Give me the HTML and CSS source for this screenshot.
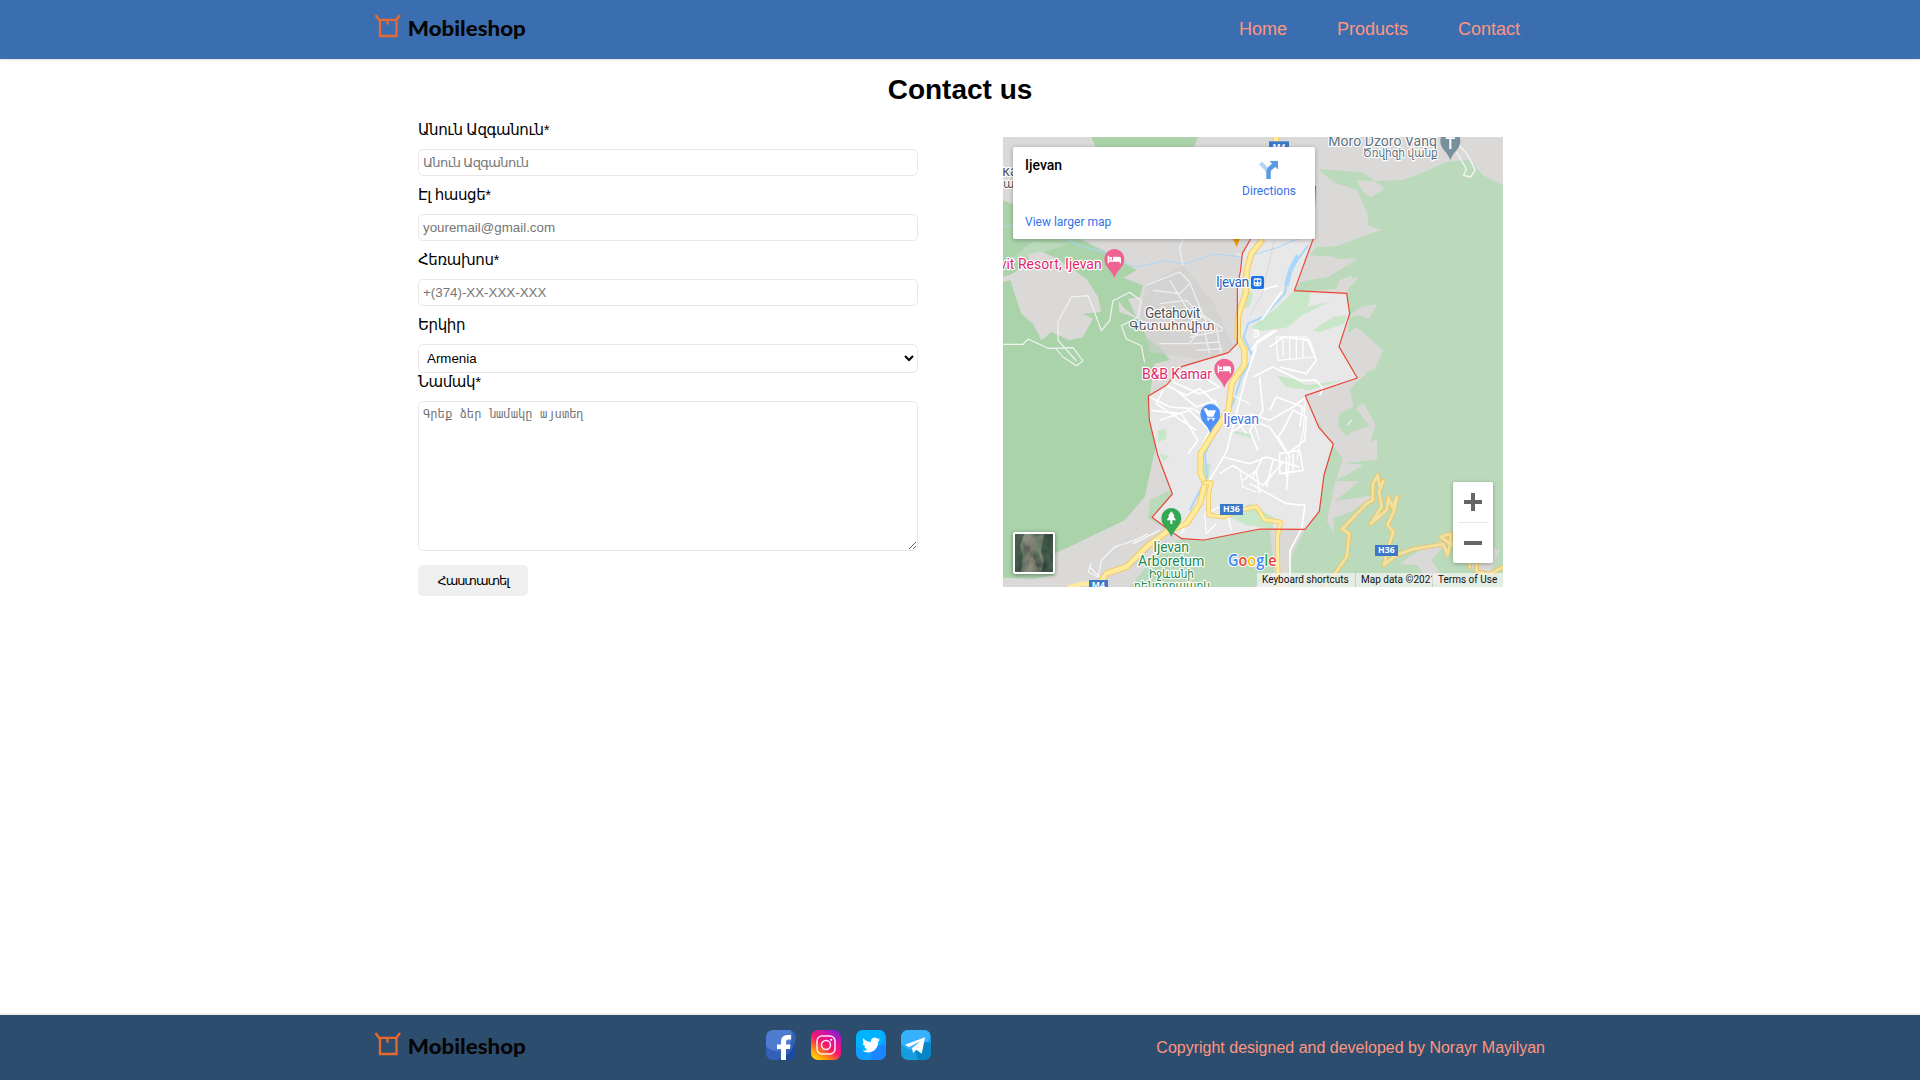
FILE: index.html
```html
<!DOCTYPE html>
<html lang="hy">
<head>
<meta charset="utf-8">
<title>Contact us</title>
<link rel="stylesheet" href="styles.css">
</head>
<body>
<svg class="defs" width="0" height="0" aria-hidden="true">
  <symbol id="logo" viewBox="0 0 160 30">
    <path d="M2 3l4.500 6M26.500 3l-4.500 6M6.500 7.800h16.500v16.200h-16.500zM14 8v4.500" transform="translate(-.5 -1)" fill="none" stroke="#e8692c" stroke-width="2.300"/>
    <text x="33.800" y="23" class="logo-text" textLength="118" lengthAdjust="spacingAndGlyphs">Mobileshop</text>
  </symbol>
</svg>

<header class="header">
  <div class="bar">
    <svg class="logo"><use href="#logo"/></svg>
    <nav class="nav"><a>Home</a><a>Products</a><a>Contact</a></nav>
  </div>
</header>

<main class="main">
  <h1 class="title">Contact us</h1>
  <div class="columns">
    <form class="form">
      <label class="label">Անուն Ազգանուն*</label>
      <input class="input input-name" placeholder="Անուն Ազգանուն">
      <label class="label">Էլ հասցե*</label>
      <input class="input" placeholder="youremail@gmail.com">
      <label class="label">Հեռախոս*</label>
      <input class="input" placeholder="+(374)-XX-XXX-XXX">
      <label class="label">Երկիր</label>
      <select class="select"><option>Armenia</option></select>
      <label class="label label-message">Նամակ*</label>
      <textarea class="textarea" placeholder="Գրեք ձեր նամակը այստեղ"></textarea>
      <button class="submit" type="button">Հաստատել</button>
    </form>

    <div class="map">
      <svg class="map-canvas" viewBox="0 0 1500 1350">
        <rect width="1500" height="1350" fill="#dbd9d7"/>
        <!-- woodland, west -->
        <path fill="#aad3aa" d="M0 190L60 215L220 300L320 350L400 400L330 440L300 410L250 425L170 370L110 340L60 330L80 370L30 410L0 420z"/>
        <path fill="#aad3aa" d="M0 435L22 430L55 530L90 560L115 610L145 585L200 610L240 600L270 545L240 530L295 525L285 480L240 410L300 405L330 410L420 445L410 480L375 485L400 540L365 515L345 490L350 525L405 545L430 600L480 640L500 669L455 680L441 770L441 860L458 930L425 1080L365 1150L155 1250L155 1315L90 1325L0 1322z"/>
        <path fill="#aad3aa" d="M265 0h320l-25 60H290z"/>
        <path fill="#bbdabb" d="M30 360l60-45 110 5-60 20-60 10-30 30z"/>
        <!-- woodland, east -->
        <path fill="#bbdabb" d="M946 96L1080 106L1115 132L1200 128L1250 110L1330 75L1400 68L1440 115L1500 145V1350H820L860 1250L890 1180H906L949 1123L963 1014L991 921L948 872L940 800L1035 760L1090 710L1100 660L1140 640L1060 570L1035 590L1040 529L1031 469L1050 415L1010 430L1000 455L930 462L874 461L900 420L1000 360L920 355L940 330L1000 328L1100 290L1135 280L1095 265L1095 235L1062 160L990 135z"/>
        <path fill="#dbd9d7" d="M1060 130L1115 132L1145 155L1105 180L1085 170zM1340 45l40 0 60 60 60 20V0h-130zM900 415l85-50 80 0-90 55-90 15zM1015 440l52-22-12 20-35 25zM1045 530l30-20 48-10-25 45-30-10-28 5zM1010 620l60-40 70 60-25 55-55 25z"/>
        <path fill="#dbd9d7" d="M907 776l50-15 85-3 10 60 30-20 35 65-15 55-30 5 50-15v60l-100 10 60 5-50 30-40 20 75 0-70 60 120-20-70 50-55 20 0 45-20-35 20-100 28-90-43-50z"/>
        <path fill="#bbdabb" d="M1010 830l45-22 45 60-50 15-20 15-25-30z"/>
        <path fill="#bbdabb" d="M440 1090l60-30 30 80-30 40-65-35zM540 1205l190-25 175-2-30 80-120 92H380l100-120z"/>
        <path fill="#dbd9d7" d="M1190 1280l90-60 55-10-50 60 40 60-50 15-30-60zM1400 1290l60-60 30 10-30 70zM800 1180h104l-44 90-10 80h-30z"/>
        <!-- village and town ground -->
        <path fill="#cfcfcf" opacity=".6" d="M430 445l110-60 90 110 70 150-120 20-140-20-30-120z"/>
        <path fill="#e8e8e8" d="M743 306L718 349L713 399L703 449V619L676 647L536 689L491 744L436 777L439 849L464 954L508 1071L447 1141L491 1174L536 1205L603 1209L771 1176L906 1177L949 1123L963 1014L991 921L948 872L907 776L1063 723L1008 629L1040 529L1031 469L874 461L931 304z"/>
        <path fill="#c8e6c8" d="M735 455l15 20-10 35-15 5zM874 461l50 0-10 50 70-20-90 45-40 35-80 10-30-10 80-60zM930 580l60-40 40-5-5 25-75 25zM820 715l50 10 40 20 110-15-100 30-70-10zM465 880l25-5v30l-25 10zM470 950l30 8-20 15zM690 880l60 15v8l-60-15zM741 1100l70 40 0 35-80-10-60-30zM603 980l20 0-8 50-12-20z"/>
        <!-- river -->
        <g fill="none" stroke="#a9d7fb" stroke-linejoin="round">
          <path stroke-width="6" d="M915 325L860 400L845 470L780 540L735 560L722 600L750 660L715 720L690 800L640 880L606 950L612 1020L560 1120"/>
          <path stroke-width="14" d="M885 355L862 400L850 445"/>
          <path stroke-width="3" d="M185 306l60 25 80 20 70 40 90-20 60 10 90-30 90 10 100-30 70-30M0 270l30-5M340 1300l60-20 60-70"/>
        </g>
        <!-- minor roads -->
        <g fill="none" stroke="#fff" stroke-width="5" stroke-linejoin="round">
          <path stroke-width="3.500" stroke="#f3f3f3" d="M0 622h60l15-16 60 28 75-2 30 40-20 14-40-26-20-24M220 672l-55-62 0-55 40-75 50-4 20 50 20 55 25-30 10-60 50-25 35 25-10 50-50 25 15 40 45 20 10 50"/>
          <path stroke-width="4" stroke="#eee" d="M430 445l100-40 30 30 40 100 60 40M450 460l80 10 30-30M470 500l80-10 60 60-50 70-90 0M540 385l-10-50 15-40M500 430l80 130M560 600l100-20M570 620l80-5M580 640l80-5M600 560l20 90M640 570l15 80M700 350l40 15"/>
          <path d="M760 635l-30 80-60 230-50 85-40 70-45 90M730 690l-40 40M815 495l20-30-60 85M775 460l50-15M745 640l20-30 50-30"/>
          <path d="M490 745l60 30 40-20 50 45 10 30 20 20M540 700l60 20 50 30-60 20-80-35M440 780l60 30 70 5 60 40M470 850l90-30 60 60-30 60M445 820l90 10 50 80-30 40M520 760l60 50 60-20M480 760l-20 40 120 80"/>
          <path d="M741 680l20-60 60-40M800 630l40-30 80 10 20 60-30 40-80-20M750 720l60-30 80 40 50 0 20 25-10 20M740 830l60 20 70-40 40-30M770 720l10 100-40 60 25 60M800 820l20-40 80 30-10 60M840 880l30-60 40 20-5 70-50 40-30-50zM680 890l60-40 60 20 60 90-10 100M660 960l80 20 50-20 100 30M650 1010l40-25 90 60 60-70M780 960l-30 60M810 970l-20 80M830 950l60-10 10 60-70 10zM850 960v60M870 950v50M741 1040l110 60 55 5-10 70-35 65v100M760 1000l10 70"/>
          <path stroke-width="3.500" d="M820 600h90l25 60-110 10zM840 600v60M860 595v70M880 595v70M900 600v65M720 860l30-10 20 60M700 850l30 40M650 1110l-45 20 5 60 30-30M645 1130l30 10 10 40M470 1180l-80 40M680 770l60 30M710 1000l10 50 40 15M720 1030l40-30M907 790l-6 90-20 90"/>
          <path stroke="#f4f4f4" stroke-width="4" d="M265 1280l-10 25 30 15 10-50 40-40 60-20 40-20M260 1290l30 30M1360 45l30 50-8 20 20 5 15-20-25-50-25-25"/>
          <path stroke="#cfcfcf" stroke-width="2" d="M815 306l-40 170-35 60M310 1270l110-110"/>
          <path stroke-width="3" d="M1033 865l15-18"/>
        </g>
        <!-- main roads -->
        <g fill="none" stroke-linejoin="round" stroke-linecap="round">
          <path stroke="#f2ca62" stroke-width="19" d="M819 0V20M775 312L745 350L731 400L728 469L705 539L704 599L724 639L724 684L686 739L676 819L631 889L593 949L593 1009L606 1039L591 1099L551 1159L491 1184L431 1229L371 1289L311 1309L281 1350"/>
          <path stroke="#ffeb9e" stroke-width="13" d="M819 0V20M775 312L745 350L731 400L728 469L705 539L704 599L724 639L724 684L686 739L676 819L631 889L593 949L593 1009L606 1039L591 1099L551 1159L491 1184L431 1229L371 1289L311 1309L281 1350M200 1350l40-10 40 0"/>
          <path stroke="#f2ca62" stroke-width="14" d="M606 1037H624L617 1070V1134L660 1140L721 1117L760 1109L785 1148L833 1155L823 1200L826 1350"/>
          <path stroke="#ffeb9e" stroke-width="9" d="M606 1037H624L617 1070V1134L660 1140L721 1117L760 1109L785 1148L833 1155L823 1200L826 1350"/>
          <path stroke="#e5c265" stroke-width="14" d="M970 1345L1031 1260L1039 1190L1018 1176L1090 1100L1109 1090L1110 1040L1124 1015L1130 1050L1141 1032L1128 1065L1136 1109L1103 1161L1151 1119L1156 1082L1168 1110L1182 1080L1172 1125L1153 1164L1171 1184L1153 1240L1143 1284L1180 1254L1231 1236L1321 1221L1333 1254L1342 1220L1343 1190L1313 1200L1342 1220L1400 1240L1400 1290M1421 1280V1304L1460 1311L1500 1290"/>
          <path stroke="#f1e1a0" stroke-width="9" d="M970 1345L1031 1260L1039 1190L1018 1176L1090 1100L1109 1090L1110 1040L1124 1015L1130 1050L1141 1032L1128 1065L1136 1109L1103 1161L1151 1119L1156 1082L1168 1110L1182 1080L1172 1125L1153 1164L1171 1184L1153 1240L1143 1284L1180 1254L1231 1236L1321 1221L1333 1254L1342 1220L1343 1190L1313 1200L1342 1220L1400 1240L1400 1290M1421 1280V1304L1460 1311L1500 1290"/>
          <path stroke="#ea4335" stroke-width="3.500" d="M743 306L718 349L713 399L703 449V619L676 647L536 689L491 744L436 777L439 849L464 954L508 1071L447 1141L491 1174L536 1205L603 1209L771 1176L906 1177L949 1123L963 1014L991 921L948 872L907 776L1063 723L1008 629L1040 529L1031 469L874 461L931 304L937 147"/>
        </g>
        <!-- road shields -->
        <g class="shield">
          <rect x="798" y="13" width="60" height="33"/><text x="828" y="38">M4</text>
          <rect x="651" y="1101" width="69" height="33"/><text x="685" y="1126">H36</text>
          <rect x="1116" y="1224" width="69" height="33"/><text x="1150" y="1249">H36</text>
          <rect x="258" y="1329" width="57" height="33"/><text x="286" y="1353">M4</text>
        </g>
        <!-- pins -->
        <path fill="#f29900" d="M687 300h26l-12 30z"/>
        <g transform="translate(334 366)"><path fill="#f06292" d="M0 57C-8 32-30 25-30 0a30 30 0 0160 0C30 25 8 32 0 57z"/><path fill="#fff" d="M-20-10h4v14h12v-11h18q6 0 6 6v14h-4v-5h-32v5h-4zM-15-6h8v8h-8z"/></g>
        <g transform="translate(664 695)"><path fill="#f06292" d="M0 57C-8 32-30 25-30 0a30 30 0 0160 0C30 25 8 32 0 57z"/><path fill="#fff" d="M-20-10h4v14h12v-11h18q6 0 6 6v14h-4v-5h-32v5h-4zM-15-6h8v8h-8z"/></g>
        <g transform="translate(622 831)"><path fill="#4f92f7" d="M0 57C-8 32-30 25-30 0a30 30 0 0160 0C30 25 8 32 0 57z"/><path fill="#fff" d="M-19-17h8l4 6h24l-8 19h-17l-10-20h-1zM-10 11h24v3h-24z"/><circle cx="-6" cy="17" r="3" fill="#fff"/><circle cx="9" cy="17" r="3" fill="#fff"/></g>
        <g transform="translate(505 1143)"><path fill="#34a853" d="M0 57C-8 32-30 25-30 0a30 30 0 0160 0C30 25 8 32 0 57z"/><path fill="#fff" d="M0-20L10-7H6L14 7H3v11h-6V7h-11L-6-7h-4z"/></g>
        <g transform="translate(1342 12)"><path fill="#78909c" d="M0 57C-8 32-30 25-30 0a30 30 0 0160 0C30 25 8 32 0 57z"/><path fill="#fff" d="M-3-25h6v14h11v5H3V24h-6V-6h-11v-5h11z"/></g>
        <g transform="translate(744 417)"><rect width="39" height="39" rx="6" fill="#1a73e8"/><path fill="#fff" d="M12 7h15q4 0 4 4v17l-5 3H13l-5-3V11q0-4 4-4z"/><path fill="#1a73e8" d="M11 11h7v8h-7zM21 11h7v8h-7zM12 23h4v4h-4zM23 23h4v4h-4z"/></g>
        <!-- labels -->
        <g class="place">
          <text class="gray" x="-2" y="117">ка</text><text class="gray arm" x="0" y="153">ա</text>
          <text class="water" x="750" y="602" transform="rotate(-8 750 602)">a</text>
          <text class="slate" x="976" y="27" textLength="326">Moro Dzoro Vanq</text>
          <text class="slate arm" x="1079" y="60" textLength="225" lengthAdjust="spacingAndGlyphs">Ծռվիզի վանք</text>
          <text class="pink" x="-10" y="396" textLength="306">vit Resort, Ijevan</text>
          <text class="blue" x="639" y="451" textLength="100">Ijevan</text>
          <text class="gray" x="426" y="543" textLength="166">Getahovit</text>
          <text class="gray arm" x="379" y="580" textLength="256" lengthAdjust="spacingAndGlyphs">Գետահովիտ</text>
          <text class="pink" x="417" y="726" textLength="210">B&amp;B Kamar</text>
          <text class="shop" x="661" y="861" textLength="107">Ijevan</text>
          <text class="green" x="451" y="1245" textLength="107">Ijevan</text>
          <text class="green" x="405" y="1287" textLength="199">Arboretum</text>
          <text class="green arm" x="438" y="1323" textLength="135" lengthAdjust="spacingAndGlyphs">Իջևանի</text>
          <text class="green arm" x="393" y="1358" textLength="228" lengthAdjust="spacingAndGlyphs">դենդրոպարկ</text>
        </g>
        <text class="google" x="675" y="1287" textLength="146" lengthAdjust="spacingAndGlyphs"><tspan fill="#4285f4">G</tspan><tspan fill="#ea4335">o</tspan><tspan fill="#fbbc05">o</tspan><tspan fill="#4285f4">g</tspan><tspan fill="#34a853">l</tspan><tspan fill="#ea4335">e</tspan></text>
      </svg>

      <div class="place-card">
        <div class="place-info"><span class="place-name">Ijevan</span><a class="larger">View larger map</a></div>
        <a class="directions">
          <svg width="20" height="20" viewBox="0 0 20 20"><path d="M1.500 3L8 9.500V12" fill="none" stroke="#b5d3f5" stroke-width="4"/><path d="M9.500 19v-6.500Q9.500 10 11 8.500L15.500 4.500" fill="none" stroke="#5c9ae6" stroke-width="4.500"/><path d="M10.500 1H19v8.500z" fill="#5c9ae6"/></svg>
          Directions
        </a>
      </div>

      <svg class="satellite" viewBox="0 0 42 42">
        <defs><filter id="terrain" x="0" y="0" width="100%" height="100%"><feTurbulence type="fractalNoise" baseFrequency=".1 .07" numOctaves="4" seed="8"/><feColorMatrix values=".55 .3 0 0 -.18  .4 .45 0 0 -.14  .4 .3 0 0 -.12  0 0 0 0 1"/></filter></defs>
        <rect width="42" height="42" rx="2" fill="#fff"/>
        <rect x="2" y="2" width="38" height="38" fill="#2f3a30"/>
        <rect x="2" y="2" width="38" height="38" filter="url(#terrain)" opacity=".7"/>
        <path d="M2 2h9l-4 12 3 10-2 16H2zM31 2h9v38H28l3-11-3-9z" fill="#0f3324" opacity=".5"/>
        <path d="M17 2l6 10-3 12 4 16h-6l-4-15 4-11z" fill="#9a8a78" opacity=".3"/>
      </svg>

      <div class="zoom">
        <svg width="40" height="81" viewBox="0 0 40 81"><path d="M11 20h18M20 11v18M11 61h18" stroke="#666" stroke-width="4"/><path d="M5 40.500h30" stroke="#e6e6e6"/></svg>
      </div>

      <div class="legal"><span class="keys">Keyboard shortcuts</span><span class="data">Map data ©2021</span><span class="terms">Terms of Use</span></div>
    </div>
  </div>
</main>

<footer class="footer">
  <div class="bar footer-bar">
    <svg class="logo"><use href="#logo"/></svg>
    <div class="social">
      <svg viewBox="0 0 30 30"><defs><clipPath id="tile"><rect width="30" height="30" rx="7"/></clipPath></defs><g clip-path="url(#tile)"><path fill="#3460b8" d="M0 0h30v30H0z"/><circle cx="11" cy="6" r="15" fill="#507cd0"/><path d="M30 8q-3 18-19 22h19z" fill="#1d49a0"/><path d="M15 30V19h-4v-4.500h4V12q0-7 6.500-7H25v4.500h-2.500Q20 9.500 20 12v2.500h4.500L24 19h-4v11z" fill="#fff"/></g></svg>
      <svg viewBox="0 0 30 30"><defs><linearGradient id="ig" x1=".15" y1="1" x2=".85" y2="0"><stop offset="0" stop-color="#ffe000"/><stop offset=".22" stop-color="#ff8b12"/><stop offset=".48" stop-color="#fa1769"/><stop offset=".75" stop-color="#d414a0"/><stop offset="1" stop-color="#7820d8"/></linearGradient></defs><rect width="30" height="30" rx="7" fill="url(#ig)"/><rect x="6" y="6" width="18" height="18" rx="5" fill="none" stroke="#fff" stroke-opacity=".9" stroke-width="1.500"/><circle cx="15" cy="15" r="4.500" fill="none" stroke="#fff" stroke-opacity=".9" stroke-width="1.600"/><circle cx="20.200" cy="9.800" r="1.100" fill="#fff"/></svg>
      <svg viewBox="0 0 30 30"><g clip-path="url(#tile)"><path fill="#109dff" d="M0 0h30v30H0z"/><circle cx="12" cy="5" r="16" fill="#00b3ff"/><circle cx="26" cy="26" r="11" fill="#1b84ff"/><path d="M24 9.300l-2 .6q1.200-.8 1.500-2-1 .6-2.200.9a3.700 3.700 0 00-6.300 3.300Q10.500 12 7.300 8.300q-1.500 3 1.100 5L6.700 13q.1 2.700 3 3.600l-1.600.1q.8 2.300 3.400 2.600-2.200 1.800-5.300 1.500Q9 22.400 12 22.400c6.500 0 10.500-5.400 10.200-11q1.100-.8 1.800-2.100z" fill="#fff"/></g></svg>
      <svg viewBox="0 0 30 30"><g clip-path="url(#tile)"><path fill="#149ee0" d="M0 0h30v30H0z"/><circle cx="13" cy="4" r="16" fill="#35b1ff"/><circle cx="26" cy="23" r="11" fill="#0786c5"/><path d="M4 14.800L24 7.300l-3.200 16.500-5.500-4-3.300 3.300-1-5.200 9-7-12 6z" fill="#fff"/></g></svg>
    </div>
    <p class="copy">Copyright designed and developed by Norayr Mayilyan</p>
  </div>
</footer>
</body>
</html>
```
FILE: styles.css
```css
* { box-sizing: border-box; }

body {
  margin: 0;
  min-height: 100vh;
  display: flex;
  flex-direction: column;
  font-family: "Liberation Sans", "DejaVu Sans", sans-serif;
  font-size: 16px;
  color: #000;
  background: #fff;
}

.defs { position: absolute; }

.header {
  height: 59px;
  background: #3b6eb0;
  box-shadow: 0 1px 2px rgba(0, 0, 0, .12);
}

.bar {
  width: 1172px;
  height: 100%;
  margin: 0 auto;
  display: flex;
  align-items: center;
  justify-content: space-between;
}

.logo { width: 160px; height: 30px; margin-bottom: 4px; }
.header .logo { margin-bottom: 3px; }
.logo-text { font: 900 21.500px Lato, sans-serif; fill: #050505; }

.nav { display: flex; gap: 50px; padding: 0 26px 2px 0; }
.nav a { font-size: 18px; line-height: 20px; color: #ff9580; }

.main { flex: 1; display: flex; flex-direction: column; }

.title {
  margin: 15px 0 0;
  text-align: center;
  font-size: 28px;
  line-height: 32px;
}

.columns {
  width: 1085px;
  margin: 14px 0 0 418px;
  display: flex;
  justify-content: space-between;
  align-items: flex-start;
}

.form { width: 500px; display: flex; flex-direction: column; }
.label {
  height: 18px;
  margin-bottom: 11px;
  font-size: 15px;
  line-height: 20px;
  letter-spacing: -.4px;
}
.label-message { margin-bottom: 10px; line-height: 18px; }

.input, .select, .textarea {
  border: 1px solid #ece6e8;
  border-radius: 5px;
  background: #fff;
  font-family: "Liberation Sans", "DejaVu Sans", sans-serif;
  font-size: 13.333px;
  outline: none;
}
.input { height: 27px; padding: 5px 4px; margin-bottom: 9px; }
.input-name { font-size: 13px; letter-spacing: -.6px; }
.input::placeholder, .textarea::placeholder { color: #757575; }
.select { height: 29px; padding: 4px; color: #000; }
.textarea {
  height: 150px;
  padding: 5px 4px;
  font-family: "DejaVu Sans Mono", monospace;
  font-size: 12.150px;
}
.submit {
  width: 110px;
  height: 31px;
  margin-top: 14px;
  padding: 0;
  border: 0;
  border-radius: 5px;
  background: #efefef;
  color: #000;
  font: 13px "Liberation Sans", "DejaVu Sans", sans-serif;
  letter-spacing: -1.100px;
}

.map {
  position: relative;
  width: 500px;
  height: 450px;
  margin-top: 17px;
  overflow: hidden;
  font-family: Roboto, sans-serif;
}
.map-canvas { display: block; width: 500px; height: 450px; }

.shield rect { fill: #3c78c8; }
.shield text { fill: #fff; font: bold 26px "Open Sans", sans-serif; text-anchor: middle; }

.place text {
  font: 42px Roboto, "DejaVu Sans", sans-serif;
  stroke: #fff;
  stroke-width: 7px;
  stroke-linejoin: round;
  paint-order: stroke;
}
.place .arm { font-size: 35px; }
.place .gray { fill: #50555b; }
.place .slate { fill: #5b7282; }
.place .pink { fill: #e0286b; }
.place .blue { fill: #2463c4; }
.place .shop { fill: #3b78e7; }
.place .green { fill: #23884a; }
.place .water { fill: #fff; stroke: none; font-style: italic; }
.google { font: 600 46px "Open Sans", sans-serif; stroke: #fff; stroke-width: 6px; paint-order: stroke; }

.place-card {
  position: absolute;
  left: 10px;
  top: 10px;
  width: 302px;
  height: 92px;
  padding: 9px 19px 9px 12px;
  display: flex;
  justify-content: space-between;
  background: #fff;
  border-radius: 2px;
  box-shadow: 0 1px 4px rgba(0, 0, 0, .3);
}
.place-info { display: flex; flex-direction: column; justify-content: space-between; }
.place-name { font-size: 14px; font-weight: 500; line-height: 18px; }
.larger, .directions { font-size: 12px; line-height: 16px; color: #3571e8; }
.directions { display: flex; flex-direction: column; align-items: center; gap: 3px; padding-top: 4px; }
.directions svg { height: 20px; }

.satellite {
  position: absolute;
  left: 10px;
  top: 395px;
  width: 42px;
  height: 42px;
  filter: drop-shadow(0 1px 2px rgba(0, 0, 0, .4));
}

.zoom {
  position: absolute;
  left: 450px;
  top: 345px;
  width: 40px;
  height: 81px;
  background: #fff;
  border-radius: 2px;
  box-shadow: 0 1px 4px rgba(0, 0, 0, .3);
}
.zoom svg { display: block; }

.legal {
  position: absolute;
  right: 0;
  bottom: 0;
  display: flex;
  gap: 1px;
  height: 14px;
  font-size: 10px;
  line-height: 14px;
  color: #111;
  white-space: nowrap;
}
.legal span { background: rgba(245, 245, 245, .7); padding-left: 5px; overflow: hidden; }
.keys { width: 98px; }
.data { width: 76px; }
.terms { width: 70px; }

.footer {
  height: 65px;
  background: #2d4d6e;
  box-shadow: 0 -1px 2px rgba(0, 0, 0, .12);
}
.footer-bar { display: grid; grid-template-columns: 392px 1fr auto; }
.social { display: flex; gap: 15px; margin-bottom: 5px; }
.social svg { width: 30px; height: 30px; }
.copy { margin: 0; padding-right: 1px; line-height: 18px; color: #ff9580; }
```
